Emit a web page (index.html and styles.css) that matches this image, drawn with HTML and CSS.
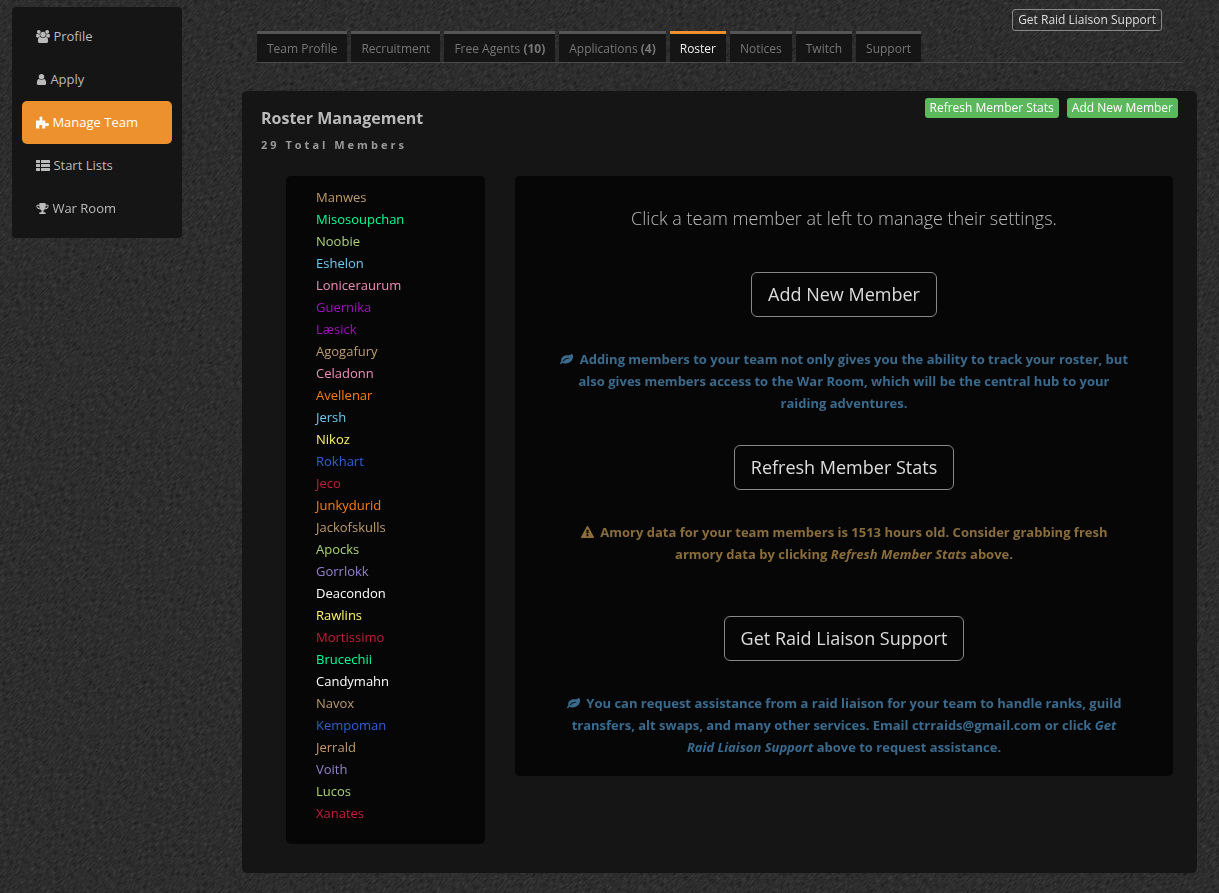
FILE: index.html
```html
<!DOCTYPE html>
<html lang="en">
<head>
<meta charset="utf-8">
<meta name="viewport" content="width=device-width, initial-scale=1">
<title>Roster Management</title>
<link rel="stylesheet" href="styles.css">
</head>
<body>
<svg class="texture" aria-hidden="true">
  <filter id="grain" x="0" y="0" width="100%" height="100%" color-interpolation-filters="sRGB">
    <feTurbulence type="fractalNoise" baseFrequency="0.18 0.9" numOctaves="2" seed="4"/>
    <feColorMatrix values="0.21 0 0 0 0.072  0.21 0 0 0 0.072  0.21 0 0 0 0.072  0 0 0 0 1"/>
  </filter>
  <rect width="100%" height="100%" filter="url(#grain)"/>
</svg>
<svg class="defs" aria-hidden="true">
  <symbol id="i-leaf" viewBox="0 0 1792 1792"><path d="M1280 704q0-26-19-45t-45-19q-172 0-318 49.5t-259.5 134-235.5 219.5q-19 21-19 45 0 26 19 45t45 19q24 0 45-19 27-24 74-71t67-66q137-124 268.5-176t313.5-52q26 0 45-19t19-45zm512-198q0 95-20 193-46 224-184.5 383t-357.5 268q-214 108-438 108-148 0-286-47-15-5-88-42t-96-37q-16 0-39.5 32t-45 70-52.5 70-60 32q-43 0-63.5-17.5t-45.5-59.5q-2-4-6-11t-5.5-10-3-9.5-1.5-13.5q0-35 31-73.5t68-65.5 68-56 31-48q0-4-14-38t-16-44q-9-51-9-104 0-115 43.5-220t119-184.5 170.5-139 204-95.5q55-18 145-25.5t179.5-9 178.5-6 163.5-24 113.5-56.5l29.5-29.5 29.5-28 27-20 36.5-16 43.5-4.5q39 0 70.5 46t47.5 112 24 124 8 96z"/></symbol>
</svg>
<div class="page">
  <nav class="sidebar" aria-label="Main">
    <a class="side-link" href="#profile"><svg class="icon icon-users" viewBox="0 0 1920 1792"><path d="M593 896q-162 5-265 128h-134q-82 0-138-40.5t-56-118.5q0-353 124-353 6 0 43.5 21t97.5 42.5 119 21.5q67 0 133-23-5 37-5 66 0 139 81 256zm1071 637q0 120-73 189.5t-194 69.5h-874q-121 0-194-69.5t-73-189.5q0-53 3.5-103.5t14-109 26.5-108.5 43-97.5 62-81 85.5-53.5 111.5-20q10 0 43 21.5t73 48 107 48 135 21.5 135-21.5 107-48 73-48 43-21.5q61 0 111.5 20t85.5 53.5 62 81 43 97.5 26.5 108.5 14 109 3.5 103.5zm-1024-1277q0 106-75 181t-181 75-181-75-75-181 75-181 181-75 181 75 75 181zm704 384q0 159-112.5 271.5t-271.5 112.5-271.5-112.5-112.5-271.5 112.5-271.5 271.5-112.5 271.5 112.5 112.5 271.5zm576 225q0 78-56 118.5t-138 40.5h-134q-103-123-265-128 81-117 81-256 0-29-5-66 66 23 133 23 59 0 119-21.5t97.5-42.5 43.5-21q124 0 124 353zm-128-609q0 106-75 181t-181 75-181-75-75-181 75-181 181-75 181 75 75 181z"/></svg> Profile</a>
    <a class="side-link" href="#apply"><svg class="icon icon-user" viewBox="256 0 1280 1792"><path d="M1536 1399q0 109-62.5 187t-150.5 78h-854q-88 0-150.5-78t-62.5-187q0-85 8.5-160.5t31.5-152 58.5-131 94-89 134.5-34.5q131 128 313 128t313-128q76 0 134.5 34.5t94 89 58.5 131 31.5 152 8.5 160.5zm-256-887q0 159-112.5 271.5t-271.5 112.5-271.5-112.5-112.5-271.5 112.5-271.5 271.5-112.5 271.5 112.5 112.5 271.5z"/></svg> Apply</a>
    <a class="side-link active" href="#team"><svg class="icon" viewBox="0 0 13 13"><path d="M0 4.5H3.6C4.6 4.5 3.4 3.3 3.4 2.2 3.4 1.1 4 .4 4.9.4S6.500 1.100 6.500 2.200C6.500 3.300 5.500 4.500 6.500 4.500H9.300V7.200C9.300 8.200 10.300 7 11.400 7 12.400 7 13 7.700 13 8.600S12.400 10.200 11.400 10.200C10.300 10.200 9.300 9.200 9.300 10.100V12.600H6.300C5.300 12.600 6.400 11.600 6.400 10.500 6.400 9.600 5.700 9.100 4.800 9.100S3.200 9.600 3.200 10.500C3.200 11.600 4.300 12.600 3.300 12.600H0Z"/></svg> Manage Team</a>
    <a class="side-link" href="#lists"><svg class="icon icon-list" viewBox="0 0 14 13"><path d="M.6 1h2.800q.6 0 .6.6v1.800q0 .6-.6.6H.6Q0 4 0 3.400V1.600Q0 1 .6 1zM5.600 1h7.800q.6 0 .6.600v1.800q0 .6-.6.600H5.600Q5 4 5 3.400V1.600Q5 1 5.600 1zM.6 5h2.800q.6 0 .6.600v1.800q0 .6-.6.600H.6Q0 8 0 7.400V5.600Q0 5 .6 5zM5.600 5h7.800q.6 0 .6.600v1.800q0 .6-.6.600H5.600Q5 8 5 7.400V5.600Q5 5 5.600 5zM.6 9h2.800q.6 0 .6.600v1.800q0 .6-.6.600H.6Q0 12 0 11.400V9.600Q0 9 .6 9zM5.600 9h7.800q.6 0 .6.600v1.800q0 .6-.6.600H5.600Q5 12 5 11.400V9.600Q5 9 5.600 9z"/></svg> Start Lists</a>
    <a class="side-link" href="#war"><svg class="icon" viewBox="64 0 1664 1792"><path d="M522 883q-74-162-74-371h-256v96q0 78 94.500 162t235.500 113zm1078-275v-96h-256q0 209-74 371 141-29 235.500-113t94.500-162zm128-128v128q0 71-41.500 143t-112 130-173 97.500-215.500 44.500q-42 54-95 95-38 34-52.500 72.500t-14.500 89.500q0 54 30.500 91t97.500 37q75 0 133.500 45.500t58.500 114.500v64q0 14-9 23t-23 9h-832q-14 0-23-9t-9-23v-64q0-69 58.500-114.500t133.500-45.500q67 0 97.500-37t30.500-91q0-51-14.500-89.500t-52.500-72.500q-53-41-95-95-113-5-215.500-44.500t-173-97.500-112-130-41.500-143v-128q0-40 28-68t68-28h288v-96q0-66 47-113t113-47h576q66 0 113 47t47 113v96h288q40 0 68 28t28 68z"/></svg> War Room</a>
  </nav>
  <main class="main">
    <div class="topbar"><button type="button" class="btn-outline small">Get Raid Liaison Support</button></div>
    <nav class="tabs" aria-label="Team">
      <a class="tab" href="#t1">Team Profile</a>
      <a class="tab" href="#t2">Recruitment</a>
      <a class="tab" href="#t3">Free Agents <b>(10)</b></a>
      <a class="tab" href="#t4">Applications <b>(4)</b></a>
      <a class="tab active" href="#t5">Roster</a>
      <a class="tab" href="#t6">Notices</a>
      <a class="tab" href="#t7">Twitch</a>
      <a class="tab" href="#t8">Support</a>
    </nav>
    <section class="panel">
      <header class="panel-head">
        <div>
          <h1>Roster Management</h1>
          <h2>29 Total Members</h2>
        </div>
        <div class="actions">
          <button type="button" class="btn-green">Refresh Member Stats</button>
          <button type="button" class="btn-green">Add New Member</button>
        </div>
      </header>
      <div class="columns">
        <ul class="box roster">
          <li><a class="warrior" href="#m">Manwes</a></li>
          <li><a class="monk" href="#m">Misosoupchan</a></li>
          <li><a class="hunter" href="#m">Noobie</a></li>
          <li><a class="mage" href="#m">Eshelon</a></li>
          <li><a class="paladin" href="#m">Loniceraurum</a></li>
          <li><a class="demon" href="#m">Guernika</a></li>
          <li><a class="demon" href="#m">Læsick</a></li>
          <li><a class="warrior" href="#m">Agogafury</a></li>
          <li><a class="paladin" href="#m">Celadonn</a></li>
          <li><a class="druid" href="#m">Avellenar</a></li>
          <li><a class="mage" href="#m">Jersh</a></li>
          <li><a class="rogue" href="#m">Nikoz</a></li>
          <li><a class="shaman" href="#m">Rokhart</a></li>
          <li><a class="death" href="#m">Jeco</a></li>
          <li><a class="druid" href="#m">Junkydurid</a></li>
          <li><a class="warrior" href="#m">Jackofskulls</a></li>
          <li><a class="hunter" href="#m">Apocks</a></li>
          <li><a class="warlock" href="#m">Gorrlokk</a></li>
          <li><a class="priest" href="#m">Deacondon</a></li>
          <li><a class="rogue" href="#m">Rawlins</a></li>
          <li><a class="death" href="#m">Mortissimo</a></li>
          <li><a class="monk" href="#m">Brucechii</a></li>
          <li><a class="priest" href="#m">Candymahn</a></li>
          <li><a class="warrior" href="#m">Navox</a></li>
          <li><a class="shaman" href="#m">Kempoman</a></li>
          <li><a class="warrior" href="#m">Jerrald</a></li>
          <li><a class="warlock" href="#m">Voith</a></li>
          <li><a class="hunter" href="#m">Lucos</a></li>
          <li><a class="death" href="#m">Xanates</a></li>
        </ul>
        <div class="box help">
          <p class="lead">Click a team member at left to manage their settings.</p>
          <button type="button" class="btn-outline large">Add New Member</button>
          <p class="note info"><svg class="icon"><use href="#i-leaf"/></svg>&nbsp; Adding members to your team not only gives you the ability to track your roster, but also gives members access to the War Room, which will be the central hub to your raiding adventures.</p>
          <button type="button" class="btn-outline large">Refresh Member Stats</button>
          <p class="note warn"><svg class="icon" viewBox="0 0 1792 1792"><path d="M1024 1375v-190q0-14-9.500-23.500t-22.500-9.500h-192q-13 0-22.500 9.500t-9.500 23.500v190q0 14 9.500 23.500t22.500 9.500h192q13 0 22.500-9.500t9.500-23.500zm-2-374l18-459q0-12-10-19-13-11-24-11h-220q-11 0-24 11-10 7-10 21l17 457q0 10 10 16.500t24 6.500h185q14 0 23.500-6.500t10.500-16.500zm-14-934l768 1408q35 63-2 126-17 29-46.500 46t-63.500 17h-1536q-34 0-63.500-17t-46.500-46q-37-63-2-126l768-1408q17-31 47-49t65-18 65 18 47 49z"/></svg>&nbsp; Amory data for your team members is 1513 hours old. Consider grabbing fresh armory data by clicking <em>Refresh Member Stats</em> above.</p>
          <button type="button" class="btn-outline large">Get Raid Liaison Support</button>
          <p class="note info"><svg class="icon"><use href="#i-leaf"/></svg>&nbsp; You can request assistance from a raid liaison for your team to handle ranks, guild transfers, alt swaps, and many other services. Email ctrraids@gmail.com or click <em>Get Raid Liaison Support</em> above to request assistance.</p>
        </div>
      </div>
    </section>
  </main>
</div>
</body>
</html>
```

FILE: styles.css
```css
* { box-sizing: border-box; }
body {
  margin: 0;
  min-height: 100vh;
  background: #2b2b2b;
  color: #bbb;
  font: 13px/22px "Open Sans", sans-serif;
  overflow-x: hidden;
}
h1, h2, p, ul { margin: 0; padding: 0; }
a { color: inherit; text-decoration: none; }
button { font-family: inherit; cursor: pointer; }

/* woven diagonal grain behind the page */
.texture {
  position: fixed;
  left: 50%;
  top: 50%;
  width: 150vmax;
  height: 150vmax;
  transform: translate(-50%, -50%) rotate(-45deg);
  z-index: -1;
}
.defs { display: none; }
.icon { width: 13px; height: 13px; fill: currentColor; vertical-align: -2px; }
.icon-users, .icon-list { width: 14px; }
.icon-user { width: 11px; }

.page { display: flex; align-items: flex-start; gap: 60px; padding: 7px 22px 20px 12px; }
.sidebar { flex: 0 0 170px; padding: 8px 10px; background: #151515; border-radius: 4px; }
.side-link { display: block; padding: 10px 14px 11px; border-radius: 5px; }
.side-link.active { background: #ec912d; color: #fff; font-weight: 500; }

.main { flex: 1; min-width: 0; }
.topbar { display: flex; justify-content: flex-end; padding: 2px 35px 0 0; }
.btn-outline { background: transparent; border: 1px solid #888; color: #ddd; }
.small { padding: 1px 5px; font-size: 12px; line-height: 18px; border-radius: 3px; }
.large { padding: 10px 16px; font-size: 18px; line-height: 23px; border-radius: 6px; }
.tabs { display: flex; gap: 4px; margin: 0 15px 28px; border-bottom: 1px solid #4a4a4a; }
.tab {
  padding: 4px 10px 2px;
  border-top: 3px solid #555;
  background: #151515;
  color: #777;
  font-size: 12px;
}
.tab.active { border-top-color: #ec912d; color: #eee; font-weight: 500; }

.panel { padding: 7px 24px 29px 19px; background: #151515; border-radius: 5px; }
.panel-head { display: flex; justify-content: space-between; }
h1 { padding-top: 8px; font-size: 16px; line-height: 24px; }
h2 { padding-top: 4px; font-size: 11px; line-height: 22px; letter-spacing: 3px; color: #999; }
.actions { display: flex; align-items: flex-start; gap: 8px; margin-right: -5px; }
.btn-green {
  padding: 1px 5px;
  border: 0;
  border-radius: 3px;
  background: #5cb85c;
  color: #fff;
  font-size: 12px;
  font-weight: 500;
  line-height: 18px;
}
.columns {
  display: grid;
  grid-template-columns: 199fr 658fr;
  gap: 30px;
  align-items: start;
  margin: 20px 0 0 25px;
}
.box { background: #060606; border-radius: 5px; }
.roster { padding: 10px 20px 20px 30px; list-style: none; }
.help { padding: 30px 43px 18px; text-align: center; }
.lead { padding-bottom: 42px; font-size: 18px; line-height: 24px; font-weight: 300; }
.note { padding: 31px 0; font-weight: 700; }
.note:last-child { padding-bottom: 0; }
.info { color: #3a6b8e; }
.warn { padding-bottom: 51px; color: #8a6d3b; }

.warrior { color: #c09c6c; }
.monk { color: #00ff96; font-weight: 500; }
.hunter { color: #abd473; }
.mage { color: #69ccf0; }
.paladin { color: #f58cba; }
.demon { color: #a010bf; }
.druid { color: #ff7d0a; }
.rogue { color: #fff569; font-weight: 500; }
.shaman { color: #2f5fd8; }
.death { color: #c41f3b; }
.warlock { color: #9482c9; }
.priest { color: #fff; font-weight: 500; }
```
